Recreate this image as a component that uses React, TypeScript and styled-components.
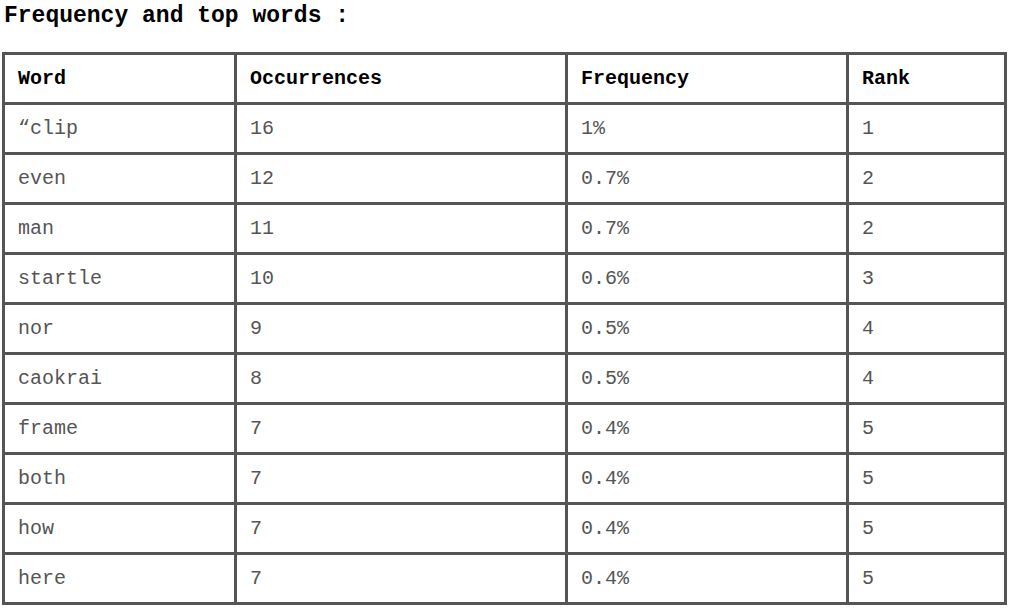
import React from "react";
import styled, { createGlobalStyle } from "styled-components";

const Global = createGlobalStyle`
  html, body { margin: 0; padding: 0; background: #fff; }
  body { font-family: "Liberation Mono", "Courier New", monospace; }
`;

const Page = styled.div`
  padding: 3px 3px 0 2px;
  width: 1003px;
`;

const Title = styled.h2`
  margin: 0 0 23px 2px;
  font-family: "Liberation Mono", "Courier New", monospace;
  font-size: 23px;
  font-weight: bold;
  color: #000;
  line-height: 26px;
`;

const Table = styled.table`
  border-collapse: collapse;
  width: 1002px;
  table-layout: fixed;
  border: 3px solid #555;
`;

const Th = styled.th<{ $w: number }>`
  box-sizing: border-box;
  width: ${(p) => p.$w}px;
  height: 50px;
  padding: 0 0 0 13px;
  text-align: left;
  border: 3px solid #555;
  font-size: 20px;
  font-weight: bold;
  color: #000;
`;

const Td = styled.td`
  box-sizing: border-box;
  height: 50px;
  padding: 0 0 0 13px;
  border: 3px solid #555;
  font-size: 20px;
  color: #555;
`;

const rows: [string, number, string, number][] = [
  ["\u201Cclip", 16, "1%", 1],
  ["even", 12, "0.7%", 2],
  ["man", 11, "0.7%", 2],
  ["startle", 10, "0.6%", 3],
  ["nor", 9, "0.5%", 4],
  ["caokrai", 8, "0.5%", 4],
  ["frame", 7, "0.4%", 5],
  ["both", 7, "0.4%", 5],
  ["how", 7, "0.4%", 5],
  ["here", 7, "0.4%", 5],
];

export default function App() {
  return (
    <>
      <Global />
      <Page>
        <Title>Frequency and top words :</Title>
        <Table>
          <thead>
            <tr>
              <Th $w={232}>Word</Th>
              <Th $w={331}>Occurrences</Th>
              <Th $w={281}>Frequency</Th>
              <Th $w={158}>Rank</Th>
            </tr>
          </thead>
          <tbody>
            {rows.map((r, i) => (
              <tr key={i}>
                <Td>{r[0]}</Td>
                <Td>{r[1]}</Td>
                <Td>{r[2]}</Td>
                <Td>{r[3]}</Td>
              </tr>
            ))}
          </tbody>
        </Table>
      </Page>
    </>
  );
}
